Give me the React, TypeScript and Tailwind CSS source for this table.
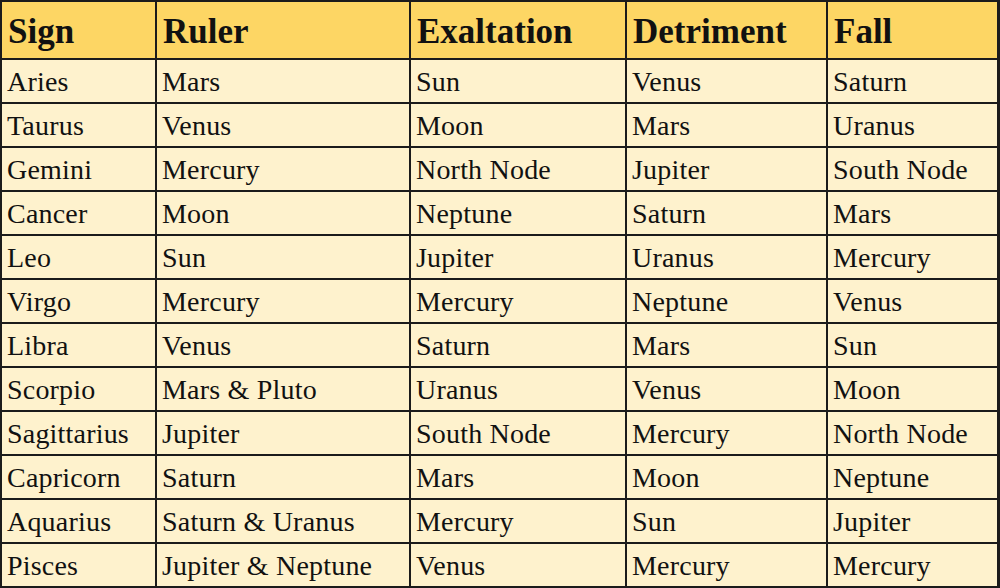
const headers = ["Sign", "Ruler", "Exaltation", "Detriment", "Fall"];

const rows: string[][] = [
	["Aries", "Mars", "Sun", "Venus", "Saturn"],
	["Taurus", "Venus", "Moon", "Mars", "Uranus"],
	["Gemini", "Mercury", "North Node", "Jupiter", "South Node"],
	["Cancer", "Moon", "Neptune", "Saturn", "Mars"],
	["Leo", "Sun", "Jupiter", "Uranus", "Mercury"],
	["Virgo", "Mercury", "Mercury", "Neptune", "Venus"],
	["Libra", "Venus", "Saturn", "Mars", "Sun"],
	["Scorpio", "Mars & Pluto", "Uranus", "Venus", "Moon"],
	["Sagittarius", "Jupiter", "South Node", "Mercury", "North Node"],
	["Capricorn", "Saturn", "Mars", "Moon", "Neptune"],
	["Aquarius", "Saturn & Uranus", "Mercury", "Sun", "Jupiter"],
	["Pisces", "Jupiter & Neptune", "Venus", "Mercury", "Mercury"],
];

export default function App() {
	return (
		<main className="h-[588px] w-[1000px] overflow-hidden bg-[#1b1b1b] text-[#111]">
			<div
				className="grid grid-cols-[153px_252px_214px_199px_169px] grid-rows-[56px_repeat(12,42px)] gap-[2px] bg-[#1b1b1b] pt-[2px] pr-[3px] pb-[2px] pl-[2px]"
				style={{ fontFamily: '"Liberation Serif", "Times New Roman", serif' }}
			>
				{headers.map((h) => (
					<div
						key={h}
						className="flex items-center bg-[#fdd664] pl-[6px] pt-[3px] text-[35px] font-bold leading-none"
					>
						{h}
					</div>
				))}
				{rows.map((row) =>
					row.map((cell, i) => (
						<div
							key={row[0] + i}
							className="flex items-center bg-[#fef2cd] pl-[5px] pt-[2px] text-[28px] leading-none tracking-[0.2px]"
						>
							{cell}
						</div>
					)),
				)}
			</div>
		</main>
	);
}
